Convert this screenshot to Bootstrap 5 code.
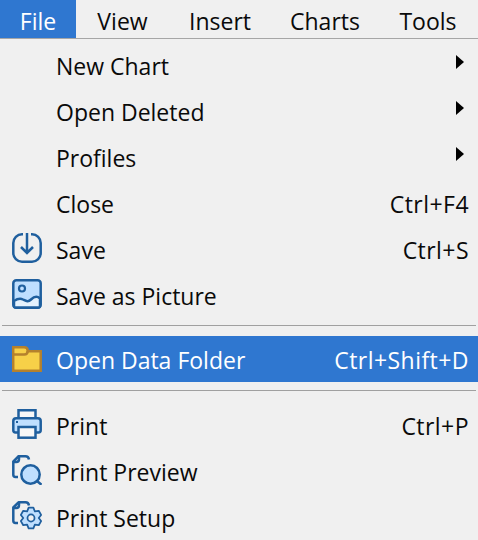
<!DOCTYPE html>
<html lang="en"><head><meta charset="utf-8">
<link href="https://cdn.jsdelivr.net/npm/bootstrap@5.3.0/dist/css/bootstrap.min.css" rel="stylesheet">
<style>
html,body{height:540px;overflow:hidden}
body{background:#f0f0f0;color:#0a0a0a;font-family:"Open Sans","Noto Sans",sans-serif;font-size:23px}
.mbar{height:39px;border-bottom:1px solid #a6a6a6}
.mtop{height:38px;line-height:42px;text-align:center;flex:none}
.mtop.act{background:#2f77d0;color:#fff}
.w-a{width:76px}.w-b{width:93px}.w-c{width:102px}.w-d{width:108px}.w-e{width:98px}
.mlist{padding-top:4px}
.mrow{height:46px;padding-right:9px}
.mrow.act{background:#2f77d0;color:#fff}
.mtxt{padding-top:1px;margin-bottom:1px}
.mrow.act .mtxt{padding-top:3px;margin-bottom:0}
.keys{letter-spacing:.45px}
.mico{width:56px;flex:none;padding-left:12px;display:flex;margin-bottom:4px}
.mrow.act .mico{margin-bottom:0}
.sepa{height:1px;background:#a0a0a0;margin:0 2px}
.s1{margin-top:6px;margin-bottom:10px}
.s2{margin-top:8px;margin-bottom:12px}
.tri{width:0;height:0;border-left:8px solid #000;border-top:7.5px solid transparent;border-bottom:7.5px solid transparent;margin-top:-9px;margin-right:5px}
</style></head><body>
<nav class="mbar d-flex">
<div class="mtop w-a act">File</div><div class="mtop w-b">View</div><div class="mtop w-c">Insert</div><div class="mtop w-d">Charts</div><div class="mtop w-e">Tools</div>
</nav>
<div class="mlist">
<div class="mrow d-flex align-items-center"><span class="mico"></span><span class="flex-grow-1 mtxt">New Chart</span><span class="tri"></span></div>
<div class="mrow d-flex align-items-center"><span class="mico"></span><span class="flex-grow-1 mtxt">Open Deleted</span><span class="tri"></span></div>
<div class="mrow d-flex align-items-center"><span class="mico"></span><span class="flex-grow-1 mtxt">Profiles</span><span class="tri"></span></div>
<div class="mrow d-flex align-items-center"><span class="mico"></span><span class="flex-grow-1 mtxt">Close</span><span class="mtxt keys">Ctrl+F4</span></div>
<div class="mrow d-flex align-items-center"><span class="mico"><svg width="30" height="30" viewBox="0 0 30 30" fill="none" stroke="#1f5f9e" stroke-width="2.500"><path d="M11 1.300H10A8.700 8.700 0 0 0 1.300 10V20A8.700 8.700 0 0 0 10 28.700H20A8.700 8.700 0 0 0 28.700 20V10A8.700 8.700 0 0 0 20 1.300H19"/><path d="M15 0V20M9 14l6 6 6-6"/></svg></span><span class="flex-grow-1 mtxt">Save</span><span class="mtxt keys">Ctrl+S</span></div>
<div class="mrow d-flex align-items-center"><span class="mico"><svg width="30" height="30" viewBox="0 0 30 30" fill="none" stroke="#1f5f9e" stroke-width="2.500"><rect x="1.300" y="1.300" width="27.400" height="27.400" rx="3" fill="#bfdfff"/><path d="M2 22c3-2 6-3 9-1.500s5 3 8 0 6-4 9-1V27a1.500 1.500 0 0 1-1.500 1.500h-23A1.500 1.500 0 0 1 2 27z" fill="#e4f1fd"/><circle cx="10" cy="9.500" r="3" stroke-width="2.200"/></svg></span><span class="flex-grow-1 mtxt">Save as Picture</span></div>
<div class="sepa s1"></div>
<div class="mrow act d-flex align-items-center"><span class="mico"><svg width="30" height="26" viewBox="0 0 30 26" stroke="#b5812c" stroke-width="2.500"><path d="M1.200 1.200h11q3.500 0 3.500 3.500v.500h13v19.600H1.200z" fill="#f7d048"/><path d="M1.200 8.500h11q3.500 0 3.500-3.500" fill="none"/></svg></span><span class="flex-grow-1 mtxt">Open Data Folder</span><span class="mtxt keys">Ctrl+Shift+D</span></div>
<div class="sepa s2"></div>
<div class="mrow d-flex align-items-center"><span class="mico"><svg width="30" height="30" viewBox="0 0 30 30" stroke="#1f5f9e" stroke-width="2.500" fill="none"><path d="M6.500 10V1.300h17V10" fill="#f7f7f7"/><path d="M6 23.500H3.500q-2.200 0-2.200-2.200V12q0-2.800 2.800-2.800h21.800q2.800 0 2.800 2.800v9.300q0 2.200-2.200 2.200H24" fill="#bfdfff"/><rect x="6.500" y="18" width="17" height="10.700" fill="#f7f7f7"/><rect x="4" y="12" width="2" height="2" fill="#1f5f9e" stroke="none"/></svg></span><span class="flex-grow-1 mtxt">Print</span><span class="mtxt keys">Ctrl+P</span></div>
<div class="mrow d-flex align-items-center"><span class="mico"><svg width="30" height="30" viewBox="0 0 30 30" stroke="#1f5f9e" stroke-width="2.500" fill="none"><path d="M6 22H3.500q-2.200 0-2.200-2.200V6.500l5.200-5.200h7q3 0 3.500 3.200"/><path d="M1.300 7h3q2.700 0 2.700-2.700V1.300"/><circle cx="18.500" cy="19.500" r="9.200" fill="#bfdfff"/><path d="M25 26l4.500 3.800"/></svg></span><span class="flex-grow-1 mtxt">Print Preview</span></div>
<div class="mrow d-flex align-items-center"><span class="mico"><svg width="30" height="30" viewBox="0 0 30 30" stroke="#1f5f9e" stroke-width="2" fill="none" stroke-linejoin="round"><path d="M6 22H3.500q-2.200 0-2.200-2.200V6.500l5.200-5.200h7q3 0 3.500 3.200" stroke-width="2.500"/><path d="M1.300 7h3q2.700 0 2.700-2.700V1.300" stroke-width="2.500"/><g transform="translate(19 17) scale(.88) translate(-19 -17)"><path d="M16.300 5.300H21.700L23.400 9.400 27.800 8.800 30.500 13.500 27.800 17 30.500 20.500 27.800 25.200 23.400 24.600 21.700 28.700H16.300L14.600 24.600 10.200 25.200 7.500 20.500 10.200 17 7.500 13.500 10.200 8.800 14.600 9.400Z" fill="#bfdfff"/><circle cx="19" cy="17" r="4" fill="#f0f0f0"/></g></svg></span><span class="flex-grow-1 mtxt">Print Setup</span></div>
</div>
</body></html>
